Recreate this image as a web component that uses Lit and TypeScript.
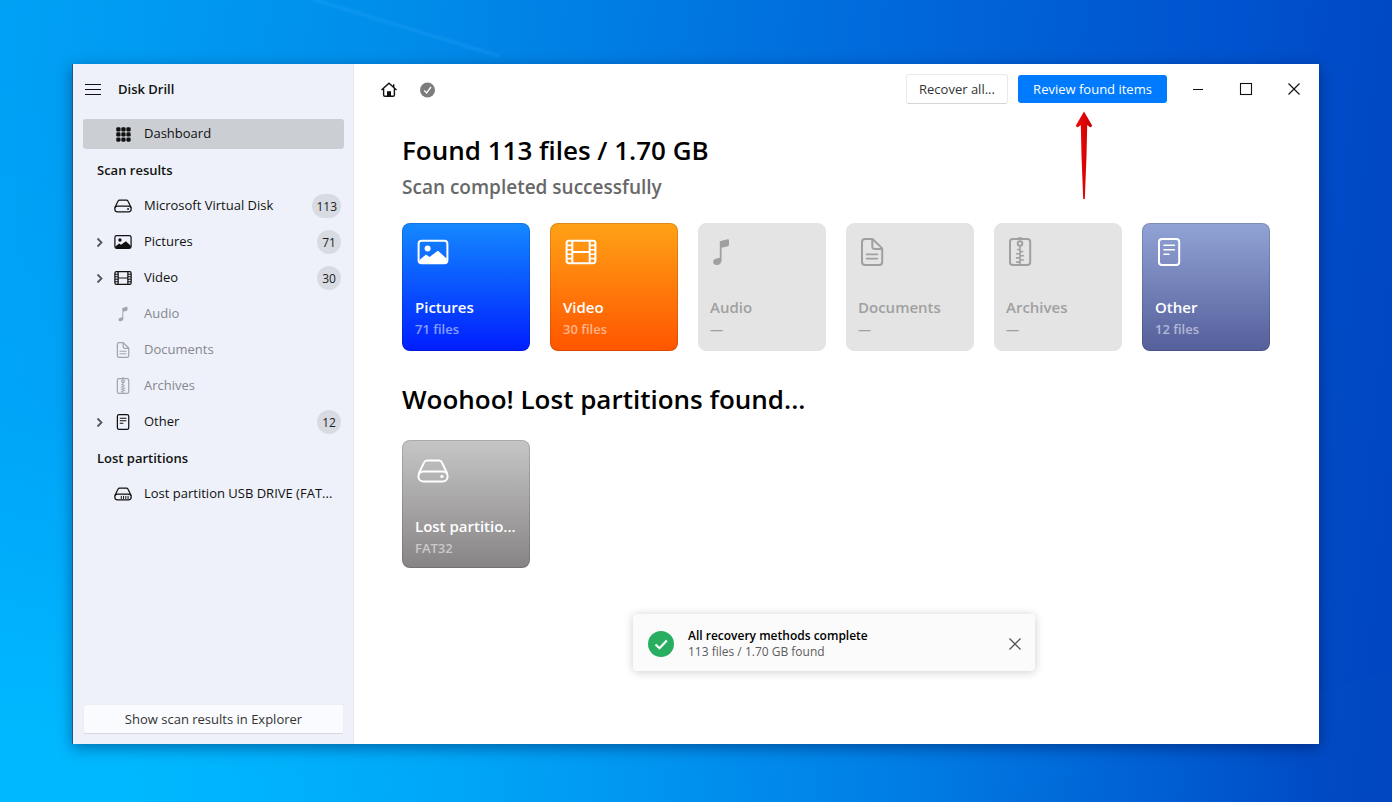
import { LitElement, html, css, svg, nothing } from "lit";
import { customElement, property } from "lit/decorators.js";

type Glyph = { x: number; w: number; art: unknown };

const drive = svg`
  <path d="M1.9 18.2 L7 7.6 Q7.9 5.6 10 5.6 H22 Q24.1 5.6 25 7.6 L30.1 18.2"/>
  <rect x="1.4" y="16.4" width="29.2" height="10" rx="5"/>`;

const glyphs: Record<string, Glyph> = {
  pictures: {
    x: 0, w: 32,
    art: svg`<rect x="1.6" y="4.8" width="28.8" height="22.4" rx="3"/>
      <circle class="solid" cx="10.6" cy="12.4" r="3"/>
      <path class="solid" d="M2.5 24 L9 18.5 L12.5 21 L20.5 15 Q21 14.8 21.6 15.2 L29.8 22.8 V25 Q29.4 27 27.5 27 H4.5 Q2.6 27 2.5 24Z"/>`,
  },
  video: {
    x: 0, w: 32,
    art: svg`<rect x="1.6" y="4.8" width="28.8" height="22.4" rx="2.4"/>
      <path d="M7.3 5V27M24.7 5V27M7.3 16H24.7"/>
      <path class="fine" d="M2 9.4H7M2 13.8H7M2 18.2H7M2 22.6H7M25 9.4H30M25 13.8H30M25 18.2H30M25 22.6H30"/>`,
  },
  audio: {
    x: 8, w: 17,
    art: svg`<path class="solid" d="M14.8 5.2 L22.6 3.2 Q24 3 24 4.4 V8.8 Q24 10 22.8 10.3 L16.6 11.8 V24.2 C16.6 27.4 14.2 29 11.7 29 C9.6 29 8.1 27.8 8.1 26 C8.1 23.6 10.2 22.5 12.4 22.2 L14.8 21.8Z"/>`,
  },
  documents: {
    x: 5, w: 22,
    art: svg`<path d="M9 3 H16.5 L26.2 12.4 V26 Q26.2 29 23.2 29 H9 Q6 29 6 26 V6 Q6 3 9 3Z"/>
      <path d="M16.3 3.4 V10.4 Q16.3 12.9 18.8 12.9 H25.8"/>
      <path class="fine" d="M10.5 18.4H21.5M10.5 22.6H21.5"/>`,
  },
  archives: {
    x: 5, w: 22,
    art: svg`<rect x="6" y="3" width="20.2" height="26" rx="2.8"/>
      <circle cx="16" cy="7.6" r="2.3"/>
      <path d="M14.5 2.2H17.5"/>
      <path class="fine" d="M16 10V29M13.6 13.5H16M16 15.6H18.6M12.6 17.7H16M16 19.8H19.4M12.6 21.9H16M16 24H19.4M12.6 26.1H16"/>`,
  },
  other: {
    x: 5, w: 22,
    art: svg`<rect x="6" y="3" width="20.2" height="26" rx="3"/>
      <path class="fine" d="M11 9.2H21.4M11 13.8H21.4M11 18.2H16"/>`,
  },
  drive: { x: 0, w: 32, art: svg`${drive}<circle class="solid" cx="25" cy="21.4" r="1.7"/>` },
  usb: {
    x: 0, w: 32,
    art: svg`${drive}<path class="fine" d="M13 20V24M17 20V24M21 20V24M25 20V24"/>`,
  },
  grid: {
    x: 0, w: 32,
    art: [4, 13, 22].map((y) => [4, 13, 22].map((x) =>
      svg`<rect class="solid" x=${x} y=${y} width="7.6" height="7.6" rx="2.4"/>`)),
  },
};

const glyph = (name: string, size: "small" | "large") => {
  const g = glyphs[name];
  const box = size === "large" ? `${g.x} 0 ${g.w} 32` : "0 0 32 32";
  return html`<svg class="glyph ${size}" viewBox=${box} aria-hidden="true">${g.art}</svg>`;
};

const glyphStyles = css`
  .glyph { fill: none; stroke: currentColor; stroke-width: 2; stroke-linejoin: round; stroke-linecap: round; flex: none; display: block; }
  .glyph .solid { fill: currentColor; stroke: none; }
  .glyph.small { width: 18px; height: 18px; stroke-width: 2.2; }
  .glyph.large { height: 32px; }
  .glyph.large .fine { stroke-width: 1.6; }
  .glyph.small .fine { stroke-width: 1.8; }
`;

const base = css`
  * { box-sizing: border-box; }
  button { font: inherit; color: inherit; margin: 0; padding: 0; border: 0; background: none; cursor: pointer; }
  a { color: inherit; text-decoration: none; }
  h1, h2, p, ul { margin: 0; padding: 0; }
`;

@customElement("nav-entry")
class NavEntry extends LitElement {
  @property() label = "";
  @property() icon = "";
  @property({ type: Number }) count = 0;
  @property({ type: Boolean }) expandable = false;
  @property({ type: Boolean }) active = false;
  @property({ type: Boolean }) dim = false;

  static styles = [base, glyphStyles, css`
    :host { display: block; padding: 3px 0; }
    .entry {
      display: grid; grid-template-columns: 14px 18px 1fr auto; align-items: center;
      column-gap: 8px; height: 30px; padding: 0 3px 0 9px; border-radius: 3px; color: #111;
    }
    .active { background: #cbced3; }
    .dim { color: #85878c; }
    .dim .glyph { color: #a3a5aa; }
    .chevron { display: block; width: 14px; height: 14px; fill: none; stroke: #55575b; stroke-width: 1.8; }
    .label { padding: 0 0 2px 4px; line-height: 20px; white-space: nowrap; overflow: hidden; }
    .count {
      min-width: 24px; height: 24px; padding: 0 4px; border-radius: 12px; background: #d8dbe1;
      font-size: 12px; line-height: 25px; text-align: center; color: #222;
    }
  `];

  render() {
    return html`<a href="#" class="entry ${this.active ? "active" : ""} ${this.dim ? "dim" : ""}">
      <span>${this.expandable
        ? html`<svg class="chevron" viewBox="0 0 14 14"><path d="M5.5 3.5L9.5 7.5L5.5 11.5"/></svg>`
        : nothing}</span>
      ${glyph(this.icon, "small")}
      <span class="label">${this.label}</span>
      ${this.count ? html`<span class="count">${this.count}</span>` : nothing}
    </a>`;
  }
}

@customElement("result-card")
class ResultCard extends LitElement {
  @property() name = "";
  @property() note = "";
  @property() icon = "";
  @property() tone = "empty";

  static styles = [base, glyphStyles, css`
    :host { display: block; }
    .card {
      display: flex; flex-direction: column; align-items: flex-start; width: 128px; height: 128px;
      padding: 12px 12px 11px; border: 1px solid #0002; border-radius: 8px; text-align: left; color: #fff;
      font-weight: 600; background-origin: border-box;
    }
    .glyph { margin: 0 2px; overflow: visible; }
    .name { margin-top: auto; font-size: 15px; line-height: 24px; white-space: nowrap; }
    .note { font-size: 13px; line-height: 20px; color: #fff8; }
    .pictures { background-image: linear-gradient(#1489ff, #001eff); }
    .video { background-image: linear-gradient(#ffa216, #ff5500); }
    .other { background-image: linear-gradient(#91a3d5, #555f9b); }
    .other .glyph { margin: 0 3px; }
    .partition { background-image: linear-gradient(#c6c6c6, #878485); padding: 14px 12px 9px; }
    .empty { background: #e4e4e4; border-color: #e4e4e4; color: #a0a0a0; padding-left: 11px; }
    .empty .note { color: #a0a0a0; }
    .empty .glyph { margin: 0 3px; }
  `];

  render() {
    return html`<button class="card ${this.tone}">
      ${glyph(this.icon, "large")}
      <span class="name">${this.name}</span>
      <span class="note">${this.note}</span>
    </button>`;
  }
}

@customElement("app-root")
class AppRoot extends LitElement {
  static styles = [base, css`
    :host {
      display: grid; min-height: 100vh; padding: 64px 73px 58px 72px; box-sizing: border-box;
      font-family: "Open Sans", "Noto Sans", sans-serif; font-size: 13px; color: #111;
      background:
        linear-gradient(17deg, transparent 83%, #40b0ff30 84%, transparent 85%) 0 0 / 500px 200px no-repeat,
        linear-gradient(162deg, transparent 0 68%, #0060c814 68%) 100% 100% / 652px 200px no-repeat,
        radial-gradient(ellipse 95% 90% at 0 100%, #00b8ff 10%, #00a8fa88 55%, #00a4f800),
        linear-gradient(96deg, #00a2f6 0%, #008eea 26%, #006bdc 58%, #0052ce 84%, #0044c0 100%);
    }
    .window {
      display: grid; grid-template-columns: 281px 1fr; min-width: 0; background: #fff;
      border-left: 1px solid #1b5788; box-shadow: 0 4px 14px #0036;
    }
    .side { display: flex; flex-direction: column; padding: 0 9px 10px 10px; background: #eef1f9; border-right: 1px solid #e6e8ee; }
    .brand { display: flex; align-items: center; gap: 17px; height: 52px; padding: 0 2px; }
    .menu { width: 16px; height: 16px; }
    .brand-name { font-weight: 600; line-height: 20px; padding-bottom: 2px; }
    svg { display: block; overflow: visible; }
    .line { fill: none; stroke: currentColor; }
    .group { height: 36px; line-height: 36px; padding-left: 14px; font-size: 13px; font-weight: 600; }
    .explorer {
      margin-top: auto; height: 30px; border-radius: 3px; background: #fafbfe; color: #333;
      border: 1px solid #eceef3; border-bottom-color: #d5d8dc;
    }
    .main { position: relative; display: flex; flex-direction: column; min-width: 0; }
    .bar { display: flex; align-items: center; height: 52px; padding: 0 1px 2px 27px; }
    .tool { width: 16px; height: 16px; margin-right: 22px; }
    .actions { display: flex; align-items: center; gap: 10px; margin-left: auto; margin-right: 7px; }
    .recover {
      width: 102px; height: 30px; border: 1px solid #eaeaea; border-bottom-color: #d6d6d6; border-radius: 3px; color: #333;
    }
    .review-spot { position: relative; }
    .review { width: 149px; height: 28px; border-radius: 3px; background: #007bff; color: #fff; }
    .pointer { position: absolute; left: 57px; top: 36px; width: 18px; height: 89px; }
    .control { display: grid; place-items: center; width: 48px; height: 32px; }
    .content { padding: 15px 48px 24px; }
    h1, h2 { font-size: 26px; line-height: 38px; font-weight: 600; color: #000; }
    .status { font-size: 19px; line-height: 28px; padding-top: 4px; font-weight: 600; color: #686868; }
    .cards { display: flex; flex-wrap: wrap; gap: 20px; }
    .found { margin-top: 22px; }
    h2 { margin: 29px 0 22px; }
    .toast-layer { position: absolute; inset: auto 5px 73px 0; display: flex; justify-content: center; }
    .toast {
      display: flex; align-items: center; gap: 14px; width: 402px; height: 57px; padding: 2px 12px 0 15px;
      border-radius: 4px; background: #fbfbfb; box-shadow: 0 1px 10px #0003;
    }
    .toast-text { flex: 1; font-size: 12px; line-height: 16px; color: #5c5c5c; }
    .toast-title { font-weight: 600; color: #000; }
    .dismiss { color: #555; }
  `];

  render() {
    return html`<div class="window">
      <aside class="side">
        <div class="brand">
          <button class="menu" aria-label="Menu"><svg class="line" width="16" height="16"><path d="M0 2.5H16M0 7.5H16M0 12.5H16"/></svg></button>
          <span class="brand-name">Disk Drill</span>
        </div>
        <nav>
          <nav-entry label="Dashboard" icon="grid" active></nav-entry>
          <p class="group">Scan results</p>
          <nav-entry label="Microsoft Virtual Disk" icon="drive" count="113"></nav-entry>
          <nav-entry label="Pictures" icon="pictures" count="71" expandable></nav-entry>
          <nav-entry label="Video" icon="video" count="30" expandable></nav-entry>
          <nav-entry label="Audio" icon="audio" dim></nav-entry>
          <nav-entry label="Documents" icon="documents" dim></nav-entry>
          <nav-entry label="Archives" icon="archives" dim></nav-entry>
          <nav-entry label="Other" icon="other" count="12" expandable></nav-entry>
          <p class="group">Lost partitions</p>
          <nav-entry label="Lost partition USB DRIVE (FAT..." icon="usb"></nav-entry>
        </nav>
        <button class="explorer">Show scan results in Explorer</button>
      </aside>
      <main class="main">
        <header class="bar">
          <button class="tool" aria-label="Home">
            <svg class="line" width="16" height="16" stroke-width="1.4"><path d="M0.5 9L8 2.2L15.5 9M2.6 7.8V14Q2.6 15.3 4 15.3H12Q13.4 15.3 13.4 14V7.8M12.7 6V3.2"/><path d="M6 15V10.2H10V15Z" fill="currentColor" stroke="none"/></svg>
          </button>
          <button class="tool" aria-label="Scan status">
            <svg width="16" height="16"><circle cx="8.5" cy="9" r="7.5" fill="#7c7c7c"/><path d="M5.2 9.4L7.6 12L12 6" fill="none" stroke="#fff" stroke-width="1.3"/></svg>
          </button>
          <div class="actions">
            <button class="recover">Recover all...</button>
            <div class="review-spot">
              <button class="review">Review found items</button>
              <svg class="pointer" viewBox="0 0 18 89" aria-hidden="true">
                <defs><linearGradient id="red"><stop offset="0" stop-color="#f20a0a"/><stop offset="1" stop-color="#c40000"/></linearGradient></defs>
                <path fill="url(#red)" d="M9 0.5L17 14.3Q17 16.5 15 16.3L12.2 14L11.5 45L9.8 88H8.2L6.5 45L5.8 14L3 16.3Q1 16.5 1 14.3Z"/>
              </svg>
            </div>
          </div>
          <button class="control" aria-label="Minimize"><svg class="line" width="12" height="12"><path d="M1 6.5H11"/></svg></button>
          <button class="control" aria-label="Maximize"><svg class="line" width="12" height="12" stroke-width="1.1"><rect x="0.5" y="0.5" width="11" height="11"/></svg></button>
          <button class="control" aria-label="Close"><svg class="line" width="12" height="12" stroke-width="1.2"><path d="M0.5 0.5L11.5 11.5M11.5 0.5L0.5 11.5"/></svg></button>
        </header>
        <section class="content">
          <h1>Found 113 files / 1.70 GB</h1>
          <p class="status">Scan completed successfully</p>
          <div class="cards found">
            <result-card name="Pictures" note="71 files" icon="pictures" tone="pictures"></result-card>
            <result-card name="Video" note="30 files" icon="video" tone="video"></result-card>
            <result-card name="Audio" note="—" icon="audio"></result-card>
            <result-card name="Documents" note="—" icon="documents"></result-card>
            <result-card name="Archives" note="—" icon="archives"></result-card>
            <result-card name="Other" note="12 files" icon="other" tone="other"></result-card>
          </div>
          <h2>Woohoo! Lost partitions found...</h2>
          <div class="cards">
            <result-card name="Lost partitio..." note="FAT32" icon="drive" tone="partition"></result-card>
          </div>
        </section>
        <div class="toast-layer">
          <div class="toast" role="status">
            <svg width="26" height="26"><circle cx="13" cy="13" r="13" fill="#27ae60"/><path d="M7.5 13.5L11.5 17.3L18.8 9.4" fill="none" stroke="#fff" stroke-width="2.2"/></svg>
            <div class="toast-text">
              <p class="toast-title">All recovery methods complete</p>
              <p>113 files / 1.70 GB found</p>
            </div>
            <button class="dismiss" aria-label="Dismiss"><svg class="line" width="16" height="16" stroke-width="1.3"><path d="M2.5 2.5L13.5 13.5M13.5 2.5L2.5 13.5"/></svg></button>
          </div>
        </div>
      </main>
    </div>`;
  }
}
